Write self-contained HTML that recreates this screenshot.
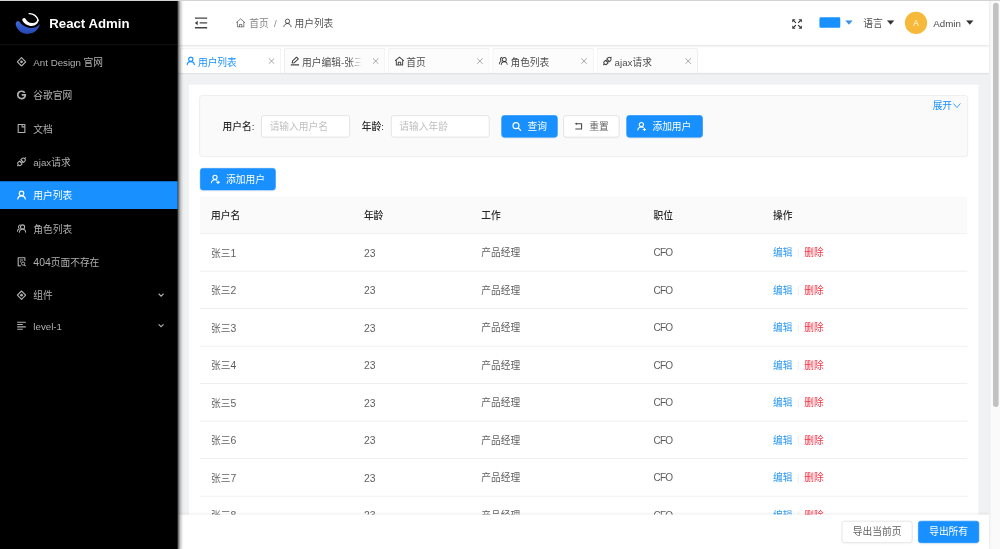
<!DOCTYPE html>
<html lang="zh-CN">
<head>
<meta charset="utf-8">
<title>React Admin</title>
<style>
*{box-sizing:border-box;margin:0;padding:0}
html,body{width:1000px;height:549px;overflow:hidden;background:#f0f1f2}
body{font-family:"Liberation Sans","Noto Sans CJK SC",sans-serif;font-size:14px;color:rgba(0,0,0,.65);position:relative}
#topline{position:absolute;left:0;top:0;width:1000px;height:1px;background:#d4d4d4;z-index:50}
#app{position:absolute;left:0;top:0;width:1440px;height:792px;transform:scale(.694444);transform-origin:0 0;background:#f0f1f2;overflow:hidden}
svg{display:block}
.abs{position:absolute}
/* sidebar */
#side{position:absolute;left:0;top:0;width:256px;height:792px;background:#000;z-index:20;box-shadow:2px 0 8px rgba(0,0,0,.35)}
#side:after{content:'';position:absolute;left:256px;top:0;width:8px;height:792px;background:linear-gradient(90deg,rgba(0,0,0,.62),rgba(0,0,0,.3) 25%,rgba(0,0,0,.1) 55%,rgba(0,0,0,0))}
#logo{position:absolute;left:0;top:1px;width:256px;height:64px;border-bottom:1px solid #1c1c1c}
#logo .t{position:absolute;left:71px;top:17.600px;font-size:19px;font-weight:bold;color:#fff;line-height:30px;white-space:nowrap}
.mi{position:absolute;left:0;width:256px;height:40px;color:#b0b0b0;line-height:40px;font-size:14px;white-space:nowrap}
.mi .ic{position:absolute;left:24px;top:13px;width:14px;height:14px}
.mi .tx{position:absolute;left:48px;top:1px}
.mi.sel{background:#1890ff;color:#fff}
.mi .ar{position:absolute;left:227px;top:16px;width:10px;height:8px}
/* header */
#head{position:absolute;left:256px;top:1px;width:1169px;height:64px;background:#fff;z-index:10;box-shadow:0 1px 3px rgba(0,21,41,.13)}
/* tabs */
#tabs{position:absolute;left:256px;top:65px;width:1169px;height:40px;background:#fff;box-shadow:0 1px 3px rgba(0,0,0,.17);z-index:5}
.tab{position:absolute;top:4px;width:146.500px;height:36px;background:#fcfcfc;border:1px solid #e6e6e6;border-bottom:none;border-radius:4px 4px 0 0;line-height:34px;white-space:nowrap;color:rgba(0,0,0,.72)}
.tab .ic{position:absolute;left:8px;top:11px;width:13.500px;height:13.500px}
.tab .tx{position:absolute;left:25.500px;top:3.200px;width:88px;overflow:hidden}
.tab .x{position:absolute;left:126.500px;top:13.300px;width:10px;height:10px}
.tab.on{color:#1890ff;background:#fff}
/* content */
#card{position:absolute;left:272px;top:121.500px;width:1137px;height:700px;background:#fff}
#qbox{position:absolute;left:15px;top:15.700px;width:1107px;height:89px;background:#fafafa;border:1px solid #e8e8e8;border-radius:4px}
.lbl{position:absolute;top:28.100px;line-height:32px;color:rgba(0,0,0,.85);font-weight:500;white-space:nowrap}
.inp{position:absolute;top:27.900px;height:32px;background:#fff;border:1px solid #d9d9d9;border-radius:4px;line-height:31px;padding-left:11px;color:#bfbfbf;white-space:nowrap}
.btn{position:absolute;height:32px;border-radius:4px;line-height:30px;white-space:nowrap;font-size:14px;border:1px solid #d9d9d9;background:#fff;color:rgba(0,0,0,.65);box-shadow:0 2px 0 rgba(0,0,0,.015)}
.btn.pri{background:#1890ff;border-color:#1890ff;color:#fff;box-shadow:0 2px 0 rgba(0,0,0,.045)}
.btn .ic{position:absolute;left:14.200px;top:8px;width:14px;height:14px}
.btn .tx{position:absolute;left:37px;top:.2px}
/* table */
#thead{position:absolute;left:16px;top:161px;width:1105px;height:54px;background:#fafafa;border-bottom:1px solid #e8e8e8;border-radius:4px 4px 0 0;color:rgba(0,0,0,.85);font-weight:500}
.tr{position:absolute;left:16px;width:1105px;height:54px;border-bottom:1px solid #e8e8e8}
.c{position:absolute;top:1.5px;line-height:53px;white-space:nowrap}
.c1{left:16px}.c2{left:236px}.c3{left:405px}.c4{left:653px}.c5{left:825px}
.ed{color:#2b98f7}.de{color:#ef3547}.n{font-size:15px}.cf{font-size:14.500px;letter-spacing:-1.200px}
.dv{display:inline-block;width:1px;height:13px;background:#e8e8e8;margin:0 8px;vertical-align:-2px}
/* footer */
#foot{position:absolute;left:256px;top:741px;width:1169px;height:51px;background:#fff;z-index:8;box-shadow:0 -1px 4px rgba(0,0,0,.1)}
/* scrollbar */
#sb{position:absolute;left:1425px;top:0;width:15px;height:792px;background:#fafafa;border-left:1px solid #e8e8e8;z-index:30}
#sb i{position:absolute;left:4px;top:4px;width:8px;height:582px;border-radius:4px;background:#c1c1c1}
</style>
</head>
<body>
<div id="app">

<!-- SIDEBAR -->
<div id="side">
  <div id="logo">
    <svg class="abs" style="left:14.400px;top:6.200px" width="57.600" height="50.400" viewBox="0 0 627 549">
      <defs><linearGradient id="lg" x1="0" y1="0" x2="0" y2="1"><stop offset="0" stop-color="#4068dc"/><stop offset="1" stop-color="#2446b0"/></linearGradient></defs>
      <path d="M92 300C110 400 200 460 290 455C380 450 450 390 475 300C440 345 390 365 330 362C250 358 180 310 150 262C135 245 100 255 92 300Z" fill="url(#lg)"/>
      <path d="M198 245C225 292 280 332 345 332C400 332 447 296 457 235L433 232C424 264 395 286 350 286C300 286 265 250 247 216C235 198 192 208 198 245Z" fill="#fff"/>
      <path d="M305 138C370 135 430 180 445 240" fill="none" stroke="#fff" stroke-width="21" stroke-linecap="round"/>
    </svg>
    <div class="t">React Admin</div>
  </div>

  <div class="mi" style="top:69px"><svg class="ic" viewBox="0 0 14 14"><path d="M7 1 13 7 7 13 1 7Z" fill="none" stroke="currentColor" stroke-width="1.700" stroke-linejoin="round"/><circle cx="7" cy="7" r="2" fill="currentColor"/></svg><span class="tx">Ant Design 官网</span></div>
  <div class="mi" style="top:117px"><svg class="ic" viewBox="0 0 14 14"><path d="M11.700 3.600A5.500 5.500 0 1 0 12.500 7.400V6.500H7.200" fill="none" stroke="currentColor" stroke-width="2.500"/></svg><span class="tx">谷歌官网</span></div>
  <div class="mi" style="top:165px"><svg class="ic" viewBox="0 0 14 14"><path d="M2.200 1.200h9.600v11.600H2.200Z" fill="none" stroke="currentColor" stroke-width="1.600" stroke-linejoin="round"/><path d="M7.800 1.200v3.500h4" fill="none" stroke="currentColor" stroke-width="1.500"/></svg><span class="tx">文档</span></div>
  <div class="mi" style="top:213px"><svg class="ic" viewBox="0 0 14 14"><g transform="rotate(-45 7 7)" fill="none" stroke="currentColor" stroke-width="1.500"><path d="M5.600 4.200H3.400A2.800 2.800 0 0 0 3.400 9.800H5.600ZM8.400 4.200H10.600A2.800 2.800 0 0 1 10.600 9.800H8.400ZM-1.800 7H.6M13.400 7H15.800M5.600 5.800H8.400M5.600 8.200H8.400" stroke-linejoin="round"/></g></svg><span class="tx">ajax请求</span></div>
  <div class="mi sel" style="top:261px"><svg class="ic" viewBox="0 0 14 14"><circle cx="7" cy="4.500" r="3.200" fill="none" stroke="currentColor" stroke-width="1.700"/><path d="M1.500 13.200C1.800 9.800 4.100 8 7 8S12.200 9.800 12.500 13.200" fill="none" stroke="currentColor" stroke-width="1.700"/></svg><span class="tx">用户列表</span></div>
  <div class="mi" style="top:309px"><svg class="ic" viewBox="0 0 14 14"><circle cx="8.500" cy="4.800" r="3" fill="none" stroke="currentColor" stroke-width="1.500"/><path d="M3.800 13.200C4 10 6 8.200 8.500 8.200S13 10 13.200 13.200" fill="none" stroke="currentColor" stroke-width="1.500"/><path d="M5.400 1.600A3.200 3.200 0 0 0 4 7.400M.8 11.800C.9 9.500 2.200 7.900 4.200 7.400" fill="none" stroke="currentColor" stroke-width="1.500"/></svg><span class="tx">角色列表</span></div>
  <div class="mi" style="top:357px"><svg class="ic" viewBox="0 0 14 14"><path d="M11.800 5.800V1.200H2.200v11.600H6" fill="none" stroke="currentColor" stroke-width="1.600" stroke-linejoin="round"/><path d="M4.600 4.400h4.800M4.600 7h2.200" stroke="currentColor" stroke-width="1.400"/><circle cx="9.300" cy="9.600" r="2.300" fill="none" stroke="currentColor" stroke-width="1.400"/><path d="M11 11.300 13 13.300" stroke="currentColor" stroke-width="1.500"/></svg><span class="tx"><span class="n">404</span>页面不存在</span></div>
  <div class="mi" style="top:405px"><svg class="ic" viewBox="0 0 14 14"><path d="M7 1 13 7 7 13 1 7Z" fill="none" stroke="currentColor" stroke-width="1.700" stroke-linejoin="round"/><circle cx="7" cy="7" r="2" fill="currentColor"/></svg><span class="tx">组件</span><svg class="ar" viewBox="0 0 10 8"><path d="M1.500 2 5 5.500 8.500 2" fill="none" stroke="currentColor" stroke-width="1.600"/></svg></div>
  <div class="mi" style="top:448.500px"><svg class="ic" viewBox="0 0 14 14"><path d="M.8 2h12.400M.8 5.300h8M.8 8.700h12.400M.8 12h8" stroke="currentColor" stroke-width="1.500"/></svg><span class="tx">level-1</span><svg class="ar" viewBox="0 0 10 8"><path d="M1.500 2 5 5.500 8.500 2" fill="none" stroke="currentColor" stroke-width="1.600"/></svg></div>
</div>

<!-- HEADER -->
<div id="head">
  <svg class="abs" style="left:24px;top:23px" width="19" height="18" viewBox="0 0 19 18"><path d="M.5 2h18M7.500 9h11M.5 16h18" stroke="#444" stroke-width="1.900"/><path d="M.6 9 4.800 5.800v6.400Z" fill="#444"/></svg>
  <div class="abs" style="left:83px;top:22.300px;line-height:22px;white-space:nowrap;color:rgba(0,0,0,.5)">
    <svg class="abs" style="left:0;top:3px" width="15" height="14" viewBox="0 0 15 14"><path d="M1 6.800 7.500 1.200 14 6.800M2.900 5.600V12.800H12.100V5.600M5.800 12.800V9.200H9.200V12.800" fill="none" stroke="currentColor" stroke-width="1.400" stroke-linejoin="round"/></svg>
    <span class="abs" style="left:20px;top:0">首页</span>
    <span class="abs" style="left:55.500px;top:0">/</span>
    <span class="abs" style="left:68px;top:0;color:rgba(0,0,0,.7)"><svg class="abs" style="left:0;top:3px" width="14" height="14" viewBox="0 0 14 14"><circle cx="7" cy="4.600" r="3.100" fill="none" stroke="currentColor" stroke-width="1.300"/><path d="M1.700 13C2 9.800 4.200 7.900 7 7.900S12 9.800 12.300 13" fill="none" stroke="currentColor" stroke-width="1.300"/></svg><span class="abs" style="left:17px;top:0">用户列表</span></span>
  </div>

  <svg class="abs" style="left:883.500px;top:25.500px" width="15.500" height="15" viewBox="0 0 16 16"><g stroke="#3a3a3a" stroke-width="1.800" fill="none"><path d="M6.300 6.300 2.500 2.500M9.700 6.300 13.500 2.500M6.300 9.700 2.500 13.500M9.700 9.700 13.500 13.500"/></g><g fill="#3a3a3a"><path d="M.6 .6H5.800L.6 5.800ZM15.400 .6H10.200L15.400 5.800ZM.6 15.400H5.800L.6 10.200ZM15.400 15.400H10.200L15.400 10.200Z"/></g></svg>
  <div class="abs" style="left:924px;top:24px;width:30px;height:15px;background:#1890ff;border-radius:2px"></div>
  <svg class="abs" style="left:961px;top:28px" width="11" height="7" viewBox="0 0 11 7"><path d="M0 0H11L5.500 6.500Z" fill="#3a95e4"/></svg>
  <div class="abs" style="left:987px;top:22.300px;line-height:22px;color:rgba(0,0,0,.72)">语言</div>
  <svg class="abs" style="left:1021px;top:28px" width="11" height="7" viewBox="0 0 11 7"><path d="M0 0H11L5.500 6.500Z" fill="#333"/></svg>
  <div class="abs" style="left:1047px;top:16px;width:32px;height:32px;border-radius:50%;background:#f6b93a;color:rgba(255,255,255,.92);text-align:center;line-height:33px;font-size:12px">A</div>
  <div class="abs" style="left:1088px;top:21.600px;line-height:22px;color:rgba(0,0,0,.75)">Admin</div>
  <svg class="abs" style="left:1135px;top:28px" width="11" height="7" viewBox="0 0 11 7"><path d="M0 0H11L5.500 6.500Z" fill="#333"/></svg>
</div>

<!-- TABS -->
<div id="tabs">
  <div class="tab on" style="left:2.5px"><svg class="ic" viewBox="0 0 14 14"><circle cx="7" cy="4.500" r="3.200" fill="none" stroke="currentColor" stroke-width="1.600"/><path d="M1.500 13.200C1.800 9.800 4.100 8 7 8S12.200 9.800 12.500 13.200" fill="none" stroke="currentColor" stroke-width="1.600"/></svg><span class="tx">用户列表</span><svg class="x" viewBox="0 0 10 10"><path d="M1 1 9 9M9 1 1 9" stroke="#8c8c8c" stroke-width="1.100"/></svg></div>
  <div class="tab" style="left:152.5px"><svg class="ic" viewBox="0 0 14 14"><path d="M2.800 10 3.500 7 9.300 1.200 12 3.900 6.200 9.700Z" fill="none" stroke="currentColor" stroke-width="1.600" stroke-linejoin="round"/><path d="M.6 12.900h12.800" stroke="currentColor" stroke-width="1.700"/></svg><span class="tx" style="-webkit-mask-image:linear-gradient(90deg,#000 78%,transparent 98%);mask-image:linear-gradient(90deg,#000 78%,transparent 98%)">用户编辑-张三1</span><svg class="x" viewBox="0 0 10 10"><path d="M1 1 9 9M9 1 1 9" stroke="#8c8c8c" stroke-width="1.100"/></svg></div>
  <div class="tab" style="left:302.5px"><svg class="ic" style="width:14.500px" viewBox="0 0 15 14"><path d="M.9 7 7.500 1.200 14.100 7M2.800 5.600V12.900H12.200V5.600M5.700 12.900V9H9.300V12.900" fill="none" stroke="currentColor" stroke-width="1.500" stroke-linejoin="round"/></svg><span class="tx">首页</span><svg class="x" viewBox="0 0 10 10"><path d="M1 1 9 9M9 1 1 9" stroke="#8c8c8c" stroke-width="1.100"/></svg></div>
  <div class="tab" style="left:452.5px"><svg class="ic" viewBox="0 0 14 14"><circle cx="8.500" cy="4.800" r="3" fill="none" stroke="currentColor" stroke-width="1.500"/><path d="M3.800 13.200C4 10 6 8.200 8.500 8.200S13 10 13.200 13.200" fill="none" stroke="currentColor" stroke-width="1.500"/><path d="M5.400 1.600A3.200 3.200 0 0 0 4 7.400M.8 11.800C.9 9.500 2.200 7.900 4.200 7.400" fill="none" stroke="currentColor" stroke-width="1.500"/></svg><span class="tx">角色列表</span><svg class="x" viewBox="0 0 10 10"><path d="M1 1 9 9M9 1 1 9" stroke="#8c8c8c" stroke-width="1.100"/></svg></div>
  <div class="tab" style="left:602.5px"><svg class="ic" viewBox="0 0 14 14"><g transform="rotate(-45 7 7)" fill="none" stroke="currentColor" stroke-width="1.500"><path d="M5.600 4.200H3.400A2.800 2.800 0 0 0 3.400 9.800H5.600ZM8.400 4.200H10.600A2.800 2.800 0 0 1 10.600 9.800H8.400ZM-1.800 7H.6M13.400 7H15.800M5.600 5.800H8.400M5.600 8.200H8.400" stroke-linejoin="round"/></g></svg><span class="tx">ajax请求</span><svg class="x" viewBox="0 0 10 10"><path d="M1 1 9 9M9 1 1 9" stroke="#8c8c8c" stroke-width="1.100"/></svg></div>
</div>

<!-- CONTENT -->
<div id="card">
  <div id="qbox">
    <div class="lbl" style="left:32.500px">用户名:</div>
    <div class="inp" style="left:88.300px;width:128px">请输入用户名</div>
    <div class="lbl" style="left:233px">年龄:</div>
    <div class="inp" style="left:275px;width:142px">请输入年龄</div>
    <div class="btn pri" style="left:433.500px;top:27.900px;width:81.500px"><svg class="ic" viewBox="0 0 14 14"><circle cx="6" cy="6" r="4.300" fill="none" stroke="#fff" stroke-width="1.700"/><path d="M9.200 9.200 13.200 13.200" stroke="#fff" stroke-width="1.800"/></svg><span class="tx">查询</span></div>
    <div class="btn" style="left:522.500px;top:27.900px;width:81.500px"><svg class="ic" viewBox="0 0 14 14"><path d="M2.500 3.200H11.500V10.800H2.500" fill="none" stroke="#444" stroke-width="1.500"/><path d="M2.300 1.400 5 3.200 2.300 5Z" fill="#444" transform="rotate(180 3.650 3.200)"/></svg><span class="tx">重置</span></div>
    <div class="btn pri" style="left:613.500px;top:27.900px;width:110px"><svg class="ic" viewBox="0 0 14 14"><circle cx="6.600" cy="4.400" r="3" fill="none" stroke="#fff" stroke-width="1.600"/><path d="M1.300 12.800C1.600 9.600 3.800 7.800 6.600 7.800C7.800 7.800 8.900 8.200 9.800 8.900" fill="none" stroke="#fff" stroke-width="1.600"/><path d="M8.600 11.600H13.400M11 9.200V14" stroke="#fff" stroke-width="1.500"/></svg><span class="tx">添加用户</span></div>
    <div class="abs" style="left:1055px;top:2.600px;line-height:22px;color:#1890ff;white-space:nowrap">展开<svg style="display:inline-block;vertical-align:-1px;margin-left:1px" width="12" height="12" viewBox="0 0 12 12"><path d="M1 3 6 9 11 3" fill="none" stroke="#1890ff" stroke-width="1.200"/></svg></div>
  </div>

  <div class="btn pri" style="left:15.500px;top:120.400px;width:109.500px"><svg class="ic" viewBox="0 0 14 14"><circle cx="6.600" cy="4.400" r="3" fill="none" stroke="#fff" stroke-width="1.600"/><path d="M1.300 12.800C1.600 9.600 3.800 7.800 6.600 7.800C7.800 7.800 8.900 8.200 9.800 8.900" fill="none" stroke="#fff" stroke-width="1.600"/><path d="M8.600 11.600H13.400M11 9.200V14" stroke="#fff" stroke-width="1.500"/></svg><span class="tx">添加用户</span></div>

  <div id="thead"><span class="c c1">用户名</span><span class="c c2">年龄</span><span class="c c3">工作</span><span class="c c4">职位</span><span class="c c5">操作</span></div>
  <div class="tr" style="top:215px"><span class="c c1">张三<span class="n">1</span></span><span class="c c2 n">23</span><span class="c c3">产品经理</span><span class="c c4 cf">CFO</span><span class="c c5"><span class="ed">编辑</span><i class="dv"></i><span class="de">删除</span></span></div>
  <div class="tr" style="top:269px"><span class="c c1">张三<span class="n">2</span></span><span class="c c2 n">23</span><span class="c c3">产品经理</span><span class="c c4 cf">CFO</span><span class="c c5"><span class="ed">编辑</span><i class="dv"></i><span class="de">删除</span></span></div>
  <div class="tr" style="top:323px"><span class="c c1">张三<span class="n">3</span></span><span class="c c2 n">23</span><span class="c c3">产品经理</span><span class="c c4 cf">CFO</span><span class="c c5"><span class="ed">编辑</span><i class="dv"></i><span class="de">删除</span></span></div>
  <div class="tr" style="top:377px"><span class="c c1">张三<span class="n">4</span></span><span class="c c2 n">23</span><span class="c c3">产品经理</span><span class="c c4 cf">CFO</span><span class="c c5"><span class="ed">编辑</span><i class="dv"></i><span class="de">删除</span></span></div>
  <div class="tr" style="top:431px"><span class="c c1">张三<span class="n">5</span></span><span class="c c2 n">23</span><span class="c c3">产品经理</span><span class="c c4 cf">CFO</span><span class="c c5"><span class="ed">编辑</span><i class="dv"></i><span class="de">删除</span></span></div>
  <div class="tr" style="top:485px"><span class="c c1">张三<span class="n">6</span></span><span class="c c2 n">23</span><span class="c c3">产品经理</span><span class="c c4 cf">CFO</span><span class="c c5"><span class="ed">编辑</span><i class="dv"></i><span class="de">删除</span></span></div>
  <div class="tr" style="top:539px"><span class="c c1">张三<span class="n">7</span></span><span class="c c2 n">23</span><span class="c c3">产品经理</span><span class="c c4 cf">CFO</span><span class="c c5"><span class="ed">编辑</span><i class="dv"></i><span class="de">删除</span></span></div>
  <div class="tr" style="top:593px"><span class="c c1">张三<span class="n">8</span></span><span class="c c2 n">23</span><span class="c c3">产品经理</span><span class="c c4 cf">CFO</span><span class="c c5"><span class="ed">编辑</span><i class="dv"></i><span class="de">删除</span></span></div>
</div>

<!-- FOOTER -->
<div id="foot">
  <div class="btn" style="left:956px;top:9px;width:102px;text-align:center;line-height:31.500px">导出当前页</div>
  <div class="btn pri" style="left:1066px;top:9px;width:88px;text-align:center;line-height:31.500px">导出所有</div>
</div>

<div id="sb"><i></i></div>
</div>
<div id="topline"></div>
</body>
</html>
